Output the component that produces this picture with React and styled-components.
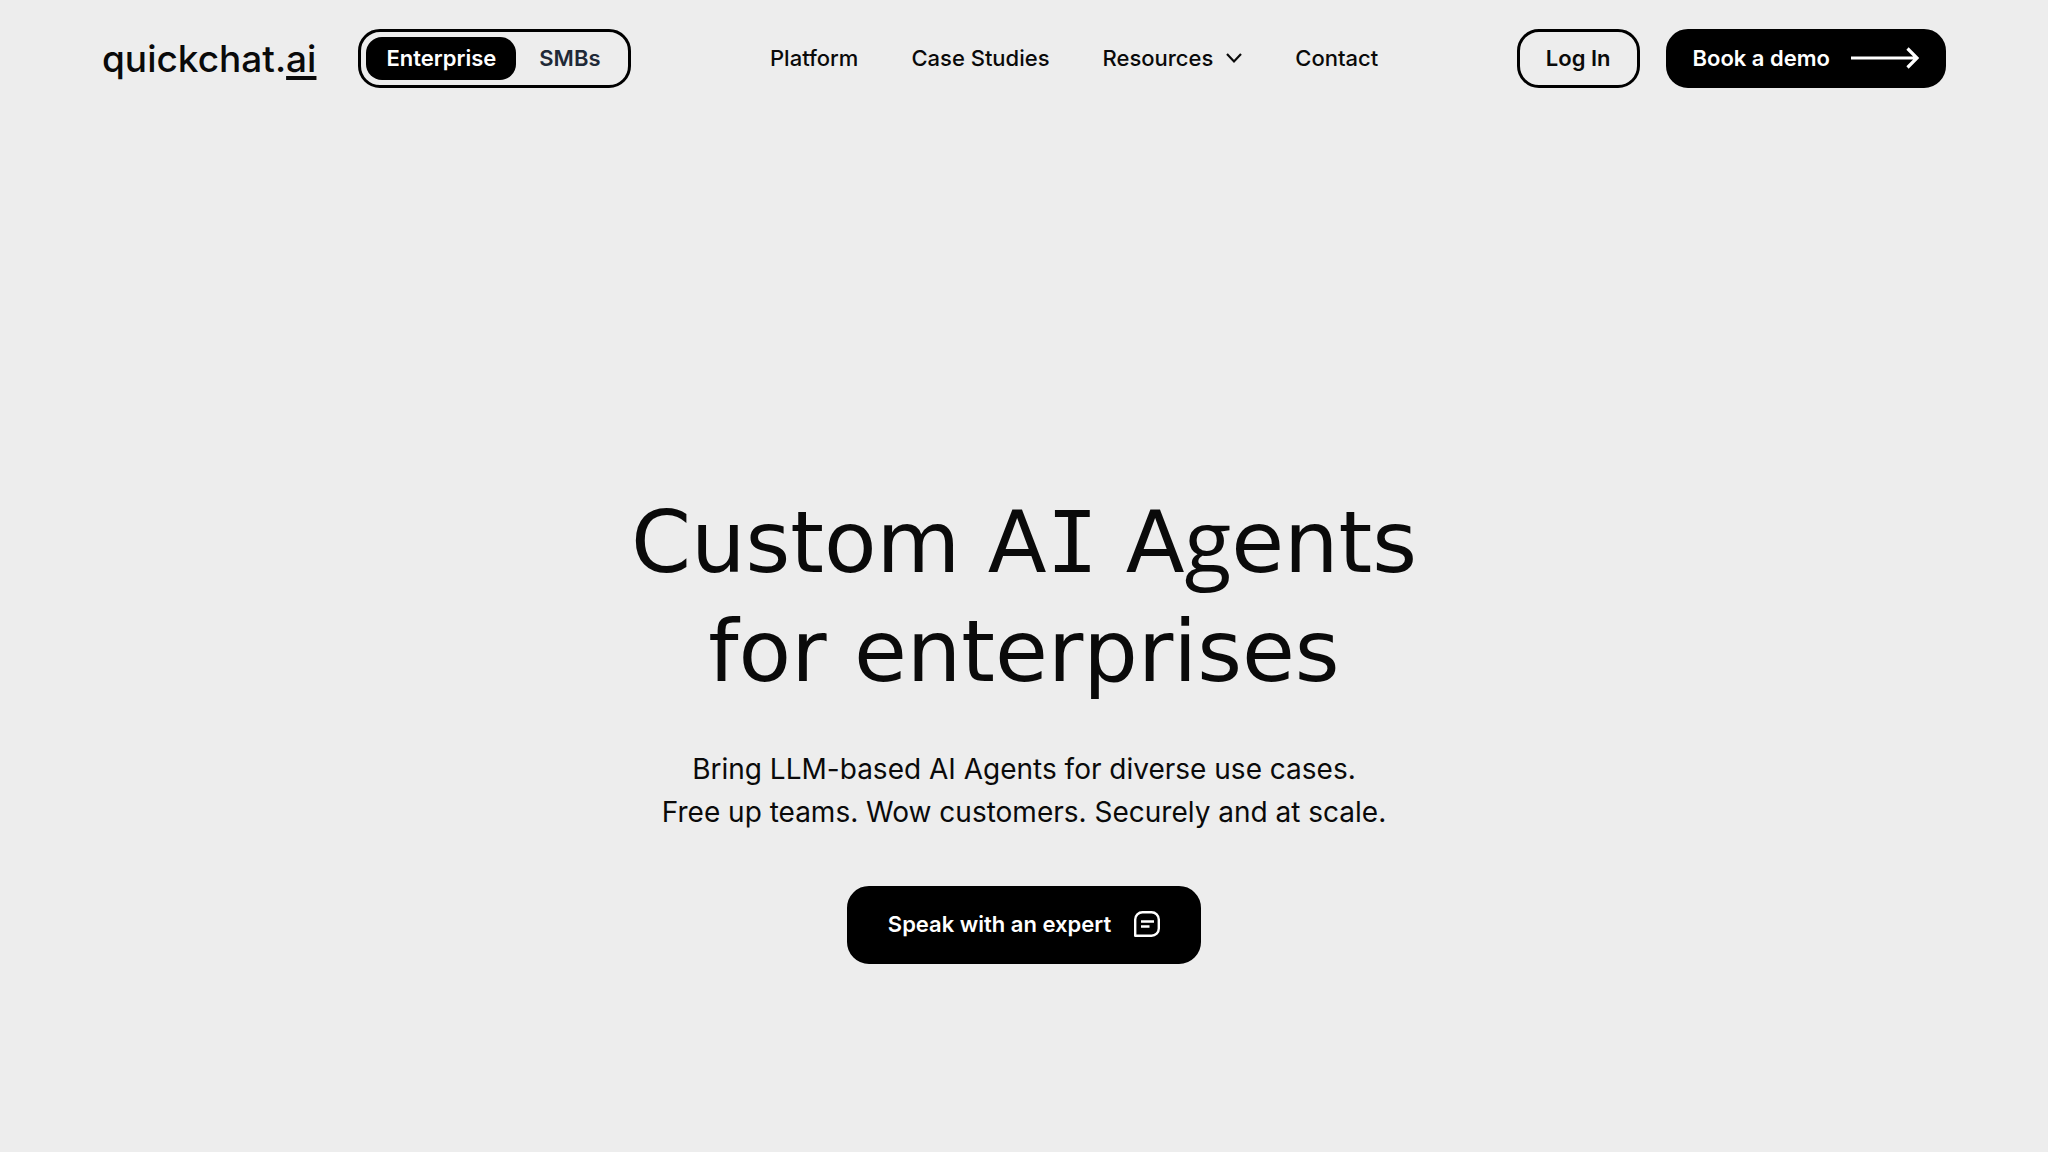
import React from 'react';
import styled, { createGlobalStyle } from 'styled-components';

const GlobalStyle = createGlobalStyle`
  *, *::before, *::after { box-sizing: border-box; }
  body {
    margin: 0;
    background: #ededed;
    color: #0a0a0a;
    font-family: Inter, "Liberation Sans", sans-serif;
  }
  a { color: inherit; text-decoration: none; }
  button { font: inherit; cursor: pointer; }
`;

const Header = styled.header`
  display: flex;
  align-items: center;
  justify-content: space-between;
  padding: 29px 102px 0;
`;

const Group = styled.div`
  display: flex;
  align-items: center;
  gap: ${({ $gap }) => $gap}px;
`;

const Logo = styled.a`
  font-size: 37px;
  line-height: 44px;
  font-weight: 500;
`;

const LogoSuffix = styled.span`
  text-decoration: underline;
  text-decoration-thickness: 4px;
  text-underline-offset: 4px;
  text-decoration-skip-ink: none;
`;

const Switcher = styled.div`
  display: flex;
  padding: 5px;
  border: 3px solid #000;
  border-radius: 22px;
`;

const SwitchOption = styled.button`
  height: 43px;
  padding: 0 ${({ $active }) => ($active ? 20 : 23)}px 2px;
  border: 0;
  border-radius: 16px;
  background: ${({ $active }) => ($active ? '#000' : 'transparent')};
  color: ${({ $active }) => ($active ? '#fff' : '#1f2937')};
  font-size: 22px;
  line-height: 32px;
  font-weight: 600;
`;

const Nav = styled.nav`
  display: flex;
  align-items: center;
  gap: 53px;
  padding-bottom: 2px;
  font-size: 22px;
  line-height: 32px;
  font-weight: 500;
`;

const MenuButton = styled.button`
  display: flex;
  align-items: center;
  gap: 13px;
  padding: 0;
  border: 0;
  background: none;
  color: inherit;
`;

const ActionLink = styled.a`
  display: inline-flex;
  align-items: center;
  gap: ${({ $large }) => ($large ? 23 : 20)}px;
  height: ${({ $large }) => ($large ? 78 : 59)}px;
  padding: 0 ${({ $large, $outline }) => ($large ? 38 : $outline ? 26 : 24)}px 2px;
  border: 3px solid #000;
  border-radius: 22px;
  background: ${({ $outline }) => ($outline ? 'transparent' : '#000')};
  color: ${({ $outline }) => ($outline ? '#0a0a0a' : '#fff')};
  font-size: 22px;
  line-height: 32px;
  font-weight: 600;
`;

const Hero = styled.main`
  display: flex;
  flex-direction: column;
  align-items: center;
  padding: 400px 32px 64px;
  text-align: center;
`;

const Title = styled.h1`
  margin: 0;
  font-family: "DejaVu Sans", sans-serif;
  font-size: 86px;
  line-height: 109px;
  font-weight: 400;
`;

const SlabLetter = styled.span`
  font-family: "DejaVu Sans Mono", monospace;
  line-height: 1;
`;

const LoopLetter = styled.span`
  font-family: "Open Sans", sans-serif;
  line-height: 1;
`;

const Lead = styled.p`
  margin: 42px 0 52px;
  font-size: 28px;
  line-height: 43px;
`;

const ChevronIcon = () => (
  <svg width="16" height="12" viewBox="0 0 16 12" fill="none" stroke="currentColor" strokeWidth="2.2" aria-hidden="true">
    <path d="M1 2l7 7.5L15 2" />
  </svg>
);

const ArrowIcon = () => (
  <svg width="69" height="22" viewBox="0 0 69 22" fill="none" stroke="currentColor" strokeWidth="3.2" aria-hidden="true">
    <path d="M1 11h66M57.500 1.5L67 11l-9.500 9.500" />
  </svg>
);

const NoteIcon = () => (
  <svg width="26" height="26" viewBox="0 0 26 26" fill="none" stroke="currentColor" strokeWidth="2.4" aria-hidden="true">
    <path d="M1.200 24.800V8.500a7.300 7.300 0 0 1 7.300-7.300h9a7.300 7.300 0 0 1 7.300 7.300v9a7.300 7.300 0 0 1-7.300 7.300z" strokeLinejoin="round" />
    <path d="M7 10.500h13M7 15.500h8.500" />
  </svg>
);

export default function App() {
  return (
    <>
      <GlobalStyle />
      <Header>
        <Group $gap={42}>
          <Logo href="#">quickchat.<LogoSuffix>ai</LogoSuffix></Logo>
          <Switcher>
            <SwitchOption type="button" $active>Enterprise</SwitchOption>
            <SwitchOption type="button">SMBs</SwitchOption>
          </Switcher>
        </Group>
        <Nav>
          <a href="#platform">Platform</a>
          <a href="#cases">Case Studies</a>
          <MenuButton type="button">Resources<ChevronIcon /></MenuButton>
          <a href="#contact">Contact</a>
        </Nav>
        <Group $gap={26}>
          <ActionLink href="#login" $outline>Log In</ActionLink>
          <ActionLink href="#demo">Book a demo<ArrowIcon /></ActionLink>
        </Group>
      </Header>
      <Hero>
        <Title>
          Custom A<SlabLetter>I</SlabLetter> A<LoopLetter>g</LoopLetter>ents<br />for enterprises
        </Title>
        <Lead>
          Bring LLM-based AI Agents for diverse use cases.<br />
          Free up teams. Wow customers. Securely and at scale.
        </Lead>
        <ActionLink href="#expert" $large>Speak with an expert<NoteIcon /></ActionLink>
      </Hero>
    </>
  );
}
